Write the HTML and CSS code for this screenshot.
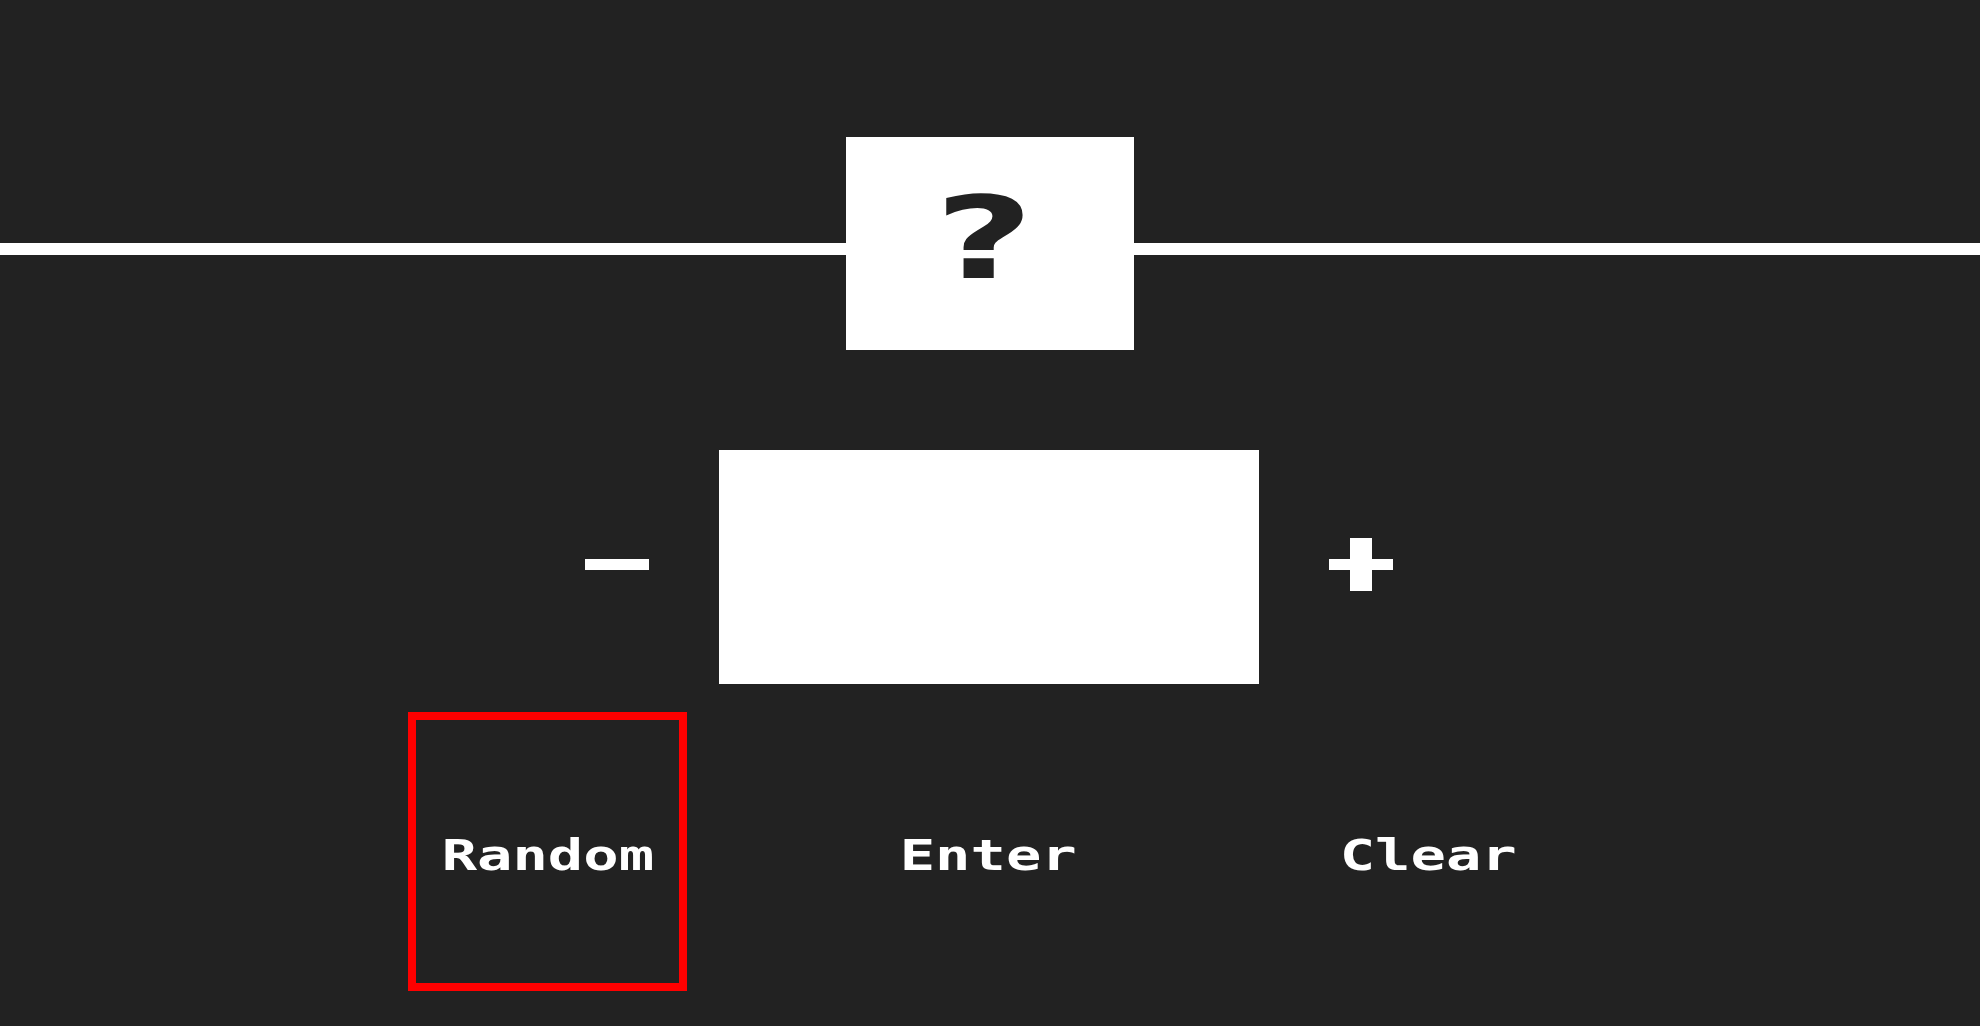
FILE: index.html
```html
<!DOCTYPE html>
<html lang="en">
<head>
<meta charset="utf-8">
<title>Guess the Number</title>
<link rel="stylesheet" href="styles.css">
</head>
<body>
<main class="game">
  <header class="banner">
    <div class="banner-line"></div>
    <div class="mystery"><span class="mystery-mark">?</span></div>
    <div class="banner-line"></div>
  </header>

  <section class="stepper">
    <button class="step-btn step-minus" aria-label="Decrease">
      <svg width="64" height="11" viewBox="0 0 64 11"><rect x="0" y="0" width="64" height="11" fill="#fff"/></svg>
    </button>
    <input class="guess-input" type="text" aria-label="Your guess">
    <button class="step-btn step-plus" aria-label="Increase">
      <svg width="64" height="53" viewBox="0 0 64 53"><rect x="0" y="21" width="64" height="11" fill="#fff"/><rect x="21" y="0" width="22" height="53" fill="#fff"/></svg>
    </button>
  </section>

  <section class="actions">
    <button class="action-btn is-focused"><span class="action-label">Random</span></button>
    <button class="action-btn"><span class="action-label">Enter</span></button>
    <button class="action-btn"><span class="action-label">Clear</span></button>
  </section>
</main>
</body>
</html>
```

FILE: styles.css
```css
html, body {
  margin: 0;
  padding: 0;
  background: #222222;
  color: #ffffff;
  height: 100%;
  overflow: hidden;
}

.game {
  display: flex;
  flex-direction: column;
  align-items: stretch;
  padding-top: 137px;
}

.banner {
  display: flex;
  align-items: flex-start;
}

.banner-line {
  flex: 1;
  height: 12px;
  margin-top: 106px;
  background: #ffffff;
}

.mystery {
  width: 288px;
  height: 213px;
  background: #ffffff;
  display: flex;
  align-items: center;
  justify-content: center;
}

.mystery-mark {
  display: inline-block;
  font-family: "DejaVu Sans", sans-serif;
  font-weight: 900;
  font-size: 114px;
  line-height: 1;
  color: #222222;
  margin-right: 12px;
  margin-bottom: 10px;
  transform: scaleX(1.5);
}

.stepper {
  margin-top: 100px;
  display: flex;
  justify-content: center;
  align-items: center;
  gap: 70px;
  padding-right: 2px;
}

.step-btn {
  background: none;
  border: 0;
  padding: 0;
  margin: 0 0 5px 0;
  display: flex;
  cursor: pointer;
}

.guess-input {
  width: 540px;
  height: 234px;
  border: 0;
  margin: 0;
  padding: 0;
  background: #ffffff;
  box-sizing: border-box;
  outline: none;
}

.actions {
  margin-top: 28px;
  display: flex;
  justify-content: center;
  gap: 161px;
  padding-right: 6px;
}

.action-btn {
  width: 279px;
  height: 279px;
  box-sizing: border-box;
  border: 8px solid transparent;
  background: transparent;
  color: #ffffff;
  font-family: "DejaVu Sans Mono", monospace;
  font-weight: 700;
  font-size: 42px;
  padding: 0;
  margin: 0;
  cursor: pointer;
  display: flex;
  align-items: center;
  justify-content: center;
}

.action-label {
  display: inline-block;
  transform: scaleX(1.4);
  margin-left: 2px;
  margin-top: 7px;
}

.action-btn.is-focused {
  border-color: #ff0000;
}
```
